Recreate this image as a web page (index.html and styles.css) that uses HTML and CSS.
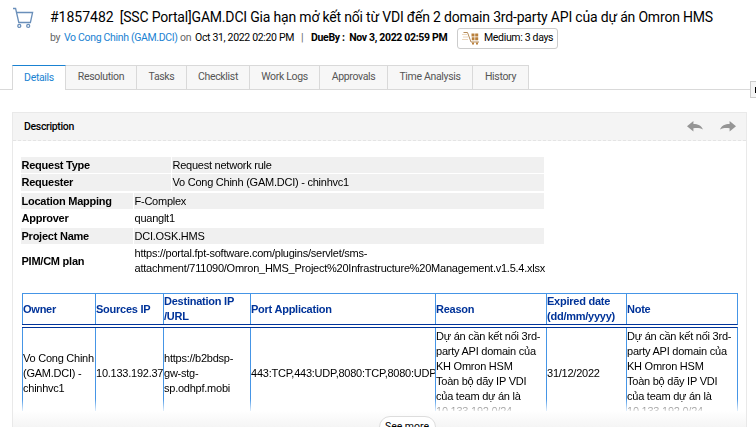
FILE: index.html
```html
<!DOCTYPE html>
<html lang="en">
<head>
<meta charset="utf-8">
<title>Request #1857482</title>
<link rel="stylesheet" href="styles.css">
</head>
<body>
<header class="request">
  <svg class="cart" width="22" height="22" viewBox="0 0 22 22" fill="none" stroke="#6a8fba" stroke-width="1.3"><path d="M0 1.5H2.6L5.8 15.5H17.4L19.6 5.5H3.6"/><circle cx="6.3" cy="18.9" r="1.5"/><circle cx="15.2" cy="18.9" r="1.5"/></svg>
  <div class="heading">
    <h1><span class="num">#1857482</span><span class="subject">[SSC Portal]GAM.DCI Gia hạn mở kết nối từ VDI đến 2 domain 3rd-party API của dự án Omron HMS</span></h1>
    <div class="meta">
      <span class="by">by</span><a class="user">Vo Cong Chinh (GAM.DCI)</a><span class="on">on</span><span class="date">Oct 31, 2022 02:20 PM</span><span class="bar">|</span><b class="due">DueBy :&nbsp; Nov 3, 2022 02:59 PM</b>
      <span class="sla"><svg width="17" height="14" viewBox="0 0 17 14" fill="none"><path d="M0 3.5H5M1 6H6M0 8.5H6" stroke="#ecd6bb"/><path d="M1.5 1.5H5.5L9 11H17" stroke="#b58a57"/><path d="M9.5 2.5h3v3h-3zM13.2 2.5h3v3h-3zM9.8 6.2h2.7v3H9.8zM13.2 6.2h3v3h-3zM10 11.5h2v2h-2zM14 11.5h2v2h-2z" fill="#b9803c"/></svg><span class="days">Medium: 3 days</span></span>
    </div>
  </div>
</header>
<nav class="tabs">
  <a class="tab active">Details</a><a class="tab t2">Resolution</a><a class="tab t3">Tasks</a><a class="tab t4">Checklist</a><a class="tab t5">Work Logs</a><a class="tab t6">Approvals</a><a class="tab t7">Time Analysis</a><a class="tab t8">History</a>
</nav>
<div class="side-toggle"><i></i></div>
<main class="panel">
  <div class="panel-head">
    <h2>Description</h2>
    <div class="arrows">
      <svg width="16" height="11" viewBox="0 0 16 11"><path fill="#959595" d="M0 5.2L6.4 0V3C11 3 14.5 4.6 16 8.5C13 7 10 6.8 6.4 7.3V10.5Z"/></svg>
      <svg width="16" height="11" viewBox="0 0 16 11"><path fill="#959595" d="M16 5.2L9.6 0V3C5 3 1.5 4.6 0 8.5C3 7 6 6.8 9.6 7.3V10.5Z"/></svg>
    </div>
  </div>
  <div class="content">
    <div class="info first">
      <b class="shade">Request Type</b><span class="shade">Request network rule</span>
      <b class="shade">Requester</b><span class="shade">Vo Cong Chinh (GAM.DCI) - chinhvc1</span>
    </div>
    <div class="info second">
      <b class="shade">Location Mapping</b><span class="shade">F-Complex</span>
      <b>Approver</b><span>quanglt1</span>
      <b class="shade">Project Name</b><span class="shade">DCI.OSK.HMS</span>
      <b>PIM/CM plan</b><span class="link">https://portal.fpt-software.com/plugins/servlet/sms-<br>attachment/711090/Omron_HMS_Project%20Infrastructure%20Management.v1.5.4.xlsx</span>
    </div>
    <div class="rules">
      <div class="row head">
        <b>Owner</b><b>Sources IP</b><b>Destination IP<br>/URL</b><b>Port Application</b><b>Reason</b><b>Expired date<br>(dd/mm/yyyy)</b><b>Note</b>
      </div>
      <div class="row data">
        <div>Vo Cong Chinh<br>(GAM.DCI) -<br>chinhvc1</div>
        <div>10.133.192.37</div>
        <div>https://b2bdsp-<br>gw-stg-<br>sp.odhpf.mobi</div>
        <div>443:TCP,443:UDP,8080:TCP,8080:UDP</div>
        <div>Dự án cần kết nối 3rd-<br>party API domain của<br>KH Omron HSM<br>Toàn bộ dãy IP VDI<br>của team dự án là<br>10.133.192.0/24</div>
        <div>31/12/2022</div>
        <div>Dự án cần kết nối 3rd-<br>party API domain của<br>KH Omron HSM<br>Toàn bộ dãy IP VDI<br>của team dự án là<br>10.133.192.0/24</div>
      </div>
    </div>
  </div>
  <div class="more"><button>See more</button></div>
</main>
</body>
</html>
```

FILE: styles.css
```css
* { box-sizing: border-box; }
body { margin: 0; width: 756px; height: 427px; overflow: hidden; background: #fff; color: #000; font-family: Roboto, sans-serif; font-size: 10.5px; letter-spacing: -0.33px; }
.request { display: flex; height: 65px; padding-left: 13px; }
.cart { margin-top: 7px; flex: none; }
.heading { margin-left: 15px; white-space: nowrap; }
h1 { display: flex; gap: 6px; margin: 8px 0 0; font-size: 14px; font-weight: 400; line-height: 18px; letter-spacing: 0; }
.subject { letter-spacing: -0.185px; }
.meta { display: flex; height: 22px; align-items: center; margin-top: 1px; line-height: 14px; }
.by, .on { color: #666; }
.by { width: 14px; }
.user { width: 116px; color: #1a82d2; }
.on { width: 15px; }
.date { width: 106px; }
.bar { width: 10px; color: #666; }
.due { width: 146px; font-weight: 700; }
.sla { display: flex; align-items: center; width: 101px; height: 21px; padding-left: 4px; gap: 5px; border: 1px solid #ccc; border-radius: 3px; }
.sla svg { flex: none; }
.tabs { display: flex; height: 25px; padding-left: 12px; border-bottom: 1px solid #d9d9d9; }
.tab { height: 24px; padding-top: 4px; border-top: 1px solid #d9d9d9; border-right: 1px solid #d9d9d9; background: #f7f7f7; color: #555; line-height: 13px; text-align: center; }
.active { width: 54px; height: 25px; border-left: 1px solid #d9d9d9; border-top-color: #1a82d2; background: #fff; color: #1a82d2; padding-top: 5px; }
.t2 { width: 71px; }
.t3 { width: 50px; }
.t4 { width: 63px; }
.t5 { width: 70px; }
.t6 { width: 68px; }
.t7 { width: 85px; }
.t8 { width: 56px; }
.side-toggle { position: absolute; left: 750px; top: 81px; width: 10px; height: 17px; padding: 5px 0 0 4px; border: 1px solid #ccc; background: #f5f5f5; }
.side-toggle i { display: block; width: 4px; height: 6px; background: #000; }
.panel { width: 735px; height: 315px; margin: 22px 0 0 12px; border: 1px solid #e9e9e9; border-bottom: 0; }
.panel-head { display: flex; justify-content: space-between; align-items: center; height: 28px; padding: 0 10px 0 11px; border-bottom: 1px dashed #e4e4e4; background: #f4f4f4; }
h2 { margin: 0; font-size: 10.5px; font-weight: 500; }
.arrows { display: flex; gap: 17px; margin-top: -1px; }
.content { height: 270px; padding: 16px 0 0 8px; overflow: hidden; font: 11px/15px "Liberation Sans", Arial, sans-serif; letter-spacing: -0.24px; white-space: nowrap; -webkit-mask-image: linear-gradient(#000 258px, transparent 272px); mask-image: linear-gradient(#000 258px, transparent 272px); }
.info { display: grid; column-gap: 1px; width: 523px; }
.info > * { display: flex; align-items: center; padding-left: 0.5px; }
.info > .link { display: block; padding-top: 1px; }
.first { grid-template-columns: 150px 372px; grid-template-rows: 16px 17px; row-gap: 1px; }
.second { grid-template-columns: 112px 410px; grid-template-rows: 16px 17px 16px 32px; row-gap: 1px; margin-top: 2px; }
.shade { background: #f0f0f0; }
.rules { width: 716px; margin: 16px 0 0 1px; border-top: 1px solid #4595e6; }
.row { display: grid; grid-template-columns: 73px 68px 87px 185px 111px 80px 111px; border-right: 1px solid #4595e6; }
.row > * { display: flex; align-items: center; border-left: 1px solid #4595e6; }
.head { height: 31px; border-bottom: 1px solid #003399; color: #003399; }
.data { height: 120px; margin-top: 2px; border-top: 1px solid #003399; }
.data > div { height: 91px; }
.more { display: flex; justify-content: center; height: 17px; padding: 5px 0 0; overflow: hidden; background: linear-gradient(#fff, #f4f4f4); }
.more button { width: 57px; height: 22px; margin-left: 55px; padding: 0; border: 1px solid #ddd; border-radius: 11px; background: #fff; color: #000; font: 10.5px/14px Roboto, sans-serif; }
```
